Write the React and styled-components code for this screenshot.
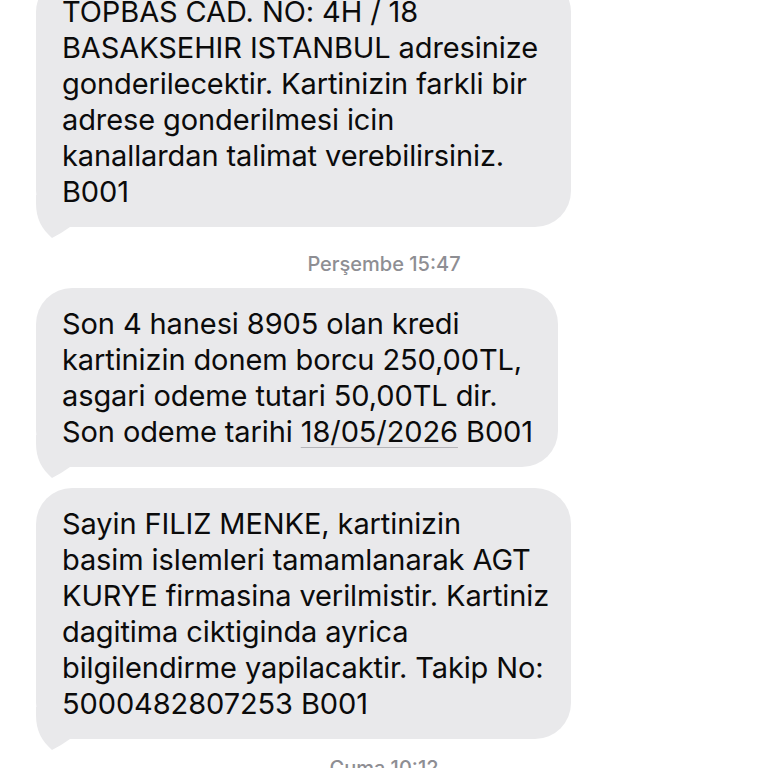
import React from "react";
import styled, { createGlobalStyle } from "styled-components";

const Global = createGlobalStyle`
  html, body { margin: 0; padding: 0; background: #ffffff; }
  body { width: 768px; height: 768px; overflow: hidden; }
`;

const Thread = styled.div`
  display: flex;
  flex-direction: column;
  align-items: flex-start;
  margin-top: -24px;
  padding-left: 36px;
  font-family: Inter, "Noto Sans", sans-serif;
  -webkit-font-smoothing: antialiased;
`;

const Bubble = styled.div`
  position: relative;
  box-sizing: border-box;
  width: ${(p) => p.$w}px;
  margin-top: ${(p) => p.$mt || 0}px;
  padding: 18px 10px 17px 26px;
  background: #e9e9eb;
  border-radius: 36px;
  color: #0b0b0b;
  font-size: 29px;
  line-height: 36px;
  letter-spacing: -0.1px;
`;

const Line = styled.div`
  position: relative;
  white-space: nowrap;
`;

const Tail = styled.svg`
  position: absolute;
  left: 0;
  bottom: -12px;
  width: 50px;
  height: 44px;
  overflow: visible;
`;

const Stamp = styled.div`
  align-self: center;
  margin: ${(p) => p.$mt ?? 25}px 0 12px;
  padding-right: 36px;
  color: #8e8e93;
  font-size: 20px;
  line-height: 24px;
  font-weight: 500;
`;

const DateLink = styled.span`
  text-decoration: underline;
  text-decoration-color: #b4b4b8;
  text-decoration-thickness: 1px;
  text-underline-offset: 5px;
`;

function BubbleTail() {
  return (
    <Tail viewBox="0 0 50 44">
      <path
        d="M0 0 L0 8 C0 24 6 34 16 43 C22 40 28 36 34 32 L50 32 L50 0 Z"
        fill="#e9e9eb"
      />
    </Tail>
  );
}

function Message({ lines, w, mt }) {
  return (
    <Bubble $w={w} $mt={mt}>
      <BubbleTail />
      {lines.map((l, i) => (
        <Line key={i}>{l}</Line>
      ))}
    </Bubble>
  );
}

export default function App() {
  return (
    <>
      <Global />
      <Thread>
        <Message
          w={535}
          lines={[
            "TOPBAS CAD. NO: 4H / 18",
            "BASAKSEHIR ISTANBUL adresinize",
            "gonderilecektir. Kartinizin farkli bir",
            "adrese gonderilmesi icin",
            "kanallardan talimat verebilirsiniz.",
            "B001",
          ]}
        />
        <Stamp>Perşembe 15:47</Stamp>
        <Message
          w={522}
          lines={[
            "Son 4 hanesi 8905 olan kredi",
            "kartinizin donem borcu 250,00TL,",
            "asgari odeme tutari 50,00TL dir.",
            <>
              Son odeme tarihi <DateLink>18/05/2026</DateLink> B001
            </>,
          ]}
        />
        <Message
          w={535}
          mt={21}
          lines={[
            "Sayin FILIZ MENKE, kartinizin",
            "basim islemleri tamamlanarak AGT",
            "KURYE firmasina verilmistir. Kartiniz",
            "dagitima ciktiginda ayrica",
            "bilgilendirme yapilacaktir. Takip No:",
            "5000482807253 B001",
          ]}
        />
        <Stamp $mt={17}>Cuma 10:12</Stamp>
      </Thread>
    </>
  );
}
